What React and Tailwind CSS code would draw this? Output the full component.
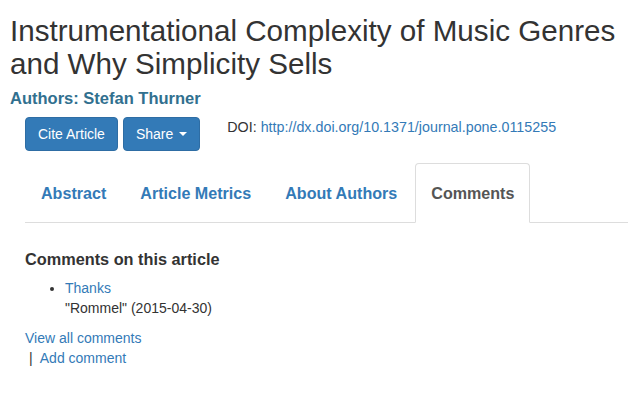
import React from 'react';

const tabs = ['Abstract', 'Article Metrics', 'About Authors', 'Comments'];

const App = () => {
  const active = 'Comments';

  return (
    <div className="min-h-screen bg-white text-[#333] font-['Liberation_Sans',Arial,sans-serif] text-[14px] leading-[20px]">
      {/* Title */}
      <h1 className="pt-[14px] pl-[10px] text-[29.6px] leading-[33px] font-normal text-[#333]">
        Instrumentational Complexity of Music Genres
        <br />
        and Why Simplicity Sells
      </h1>
      <h3 className="mt-[8px] pl-[10px] text-[16.5px] leading-[20px] font-bold text-[#31708f]">
        Authors: Stefan Thurner
      </h3>

      <div className="pl-[25px]">
        {/* Actions + DOI */}
        <div className="mt-[9px] flex items-start">
          <button className="h-[34px] px-[12px] rounded-[4px] border border-[#2e6da4] bg-[#337ab7] text-white text-[14px]">
            Cite Article
          </button>
          <button className="ml-[5px] h-[34px] px-[12px] rounded-[4px] border border-[#2e6da4] bg-[#337ab7] text-white text-[14px] flex items-center">
            Share
            <span className="ml-[6px] w-0 h-0 border-t-[4px] border-t-white border-x-[4px] border-x-transparent"></span>
          </button>
          <div className="ml-[27px] text-[14.3px] leading-[20px]">
            DOI: <a className="text-[#337ab7]" href="#">http://dx.doi.org/10.1371/journal.pone.0115255</a>
          </div>
        </div>

        {/* Tabs */}
        <ul className="mt-[12px] flex border-b border-[#ddd]">
          {tabs.map((t) => (
            <li key={t} className="mr-[2px] -mb-px">
              <a
                href="#"
                className={
                  t === active
                    ? 'block px-[15px] py-[19px] leading-[20px] text-[16.1px] font-bold text-[#555] bg-white border border-[#ddd] border-b-transparent rounded-t-[4px]'
                    : 'block px-[15px] py-[19px] leading-[20px] text-[16.1px] font-bold text-[#337ab7] border border-transparent'
                }
              >
                {t}
              </a>
            </li>
          ))}
        </ul>

        {/* Comments pane */}
        <h4 className="mt-[27px] text-[16.3px] leading-[18px] font-bold text-[#333]">Comments on this article</h4>
        <ul className="mt-[10px] pl-[40px] list-disc">
          <li>
            <a href="#" className="text-[#337ab7]">Thanks</a>
            <br />
            "Rommel" (2015-04-30)
          </li>
        </ul>
        <div className="mt-[10px]">
          <a href="#" className="text-[#337ab7]">View all comments</a>
          <br />
          <span className="ml-[4px] mr-[4px] text-[#333]">|</span>{' '}
          <a href="#" className="text-[#337ab7]">Add comment</a>
        </div>
      </div>
    </div>
  );
};

export default App;
